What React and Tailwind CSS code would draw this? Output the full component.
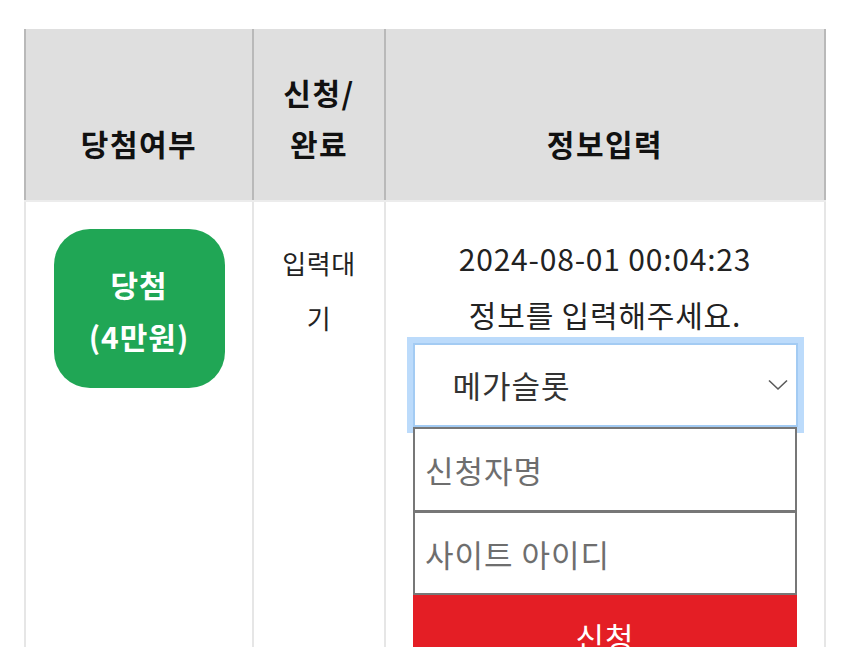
import React, { useState } from "react";

const font = { fontFamily: '"Noto Sans CJK KR", "Noto Sans", sans-serif' };

const ChevronDown = () => (
  <svg
    className="pointer-events-none absolute right-[10px] top-1/2 -translate-y-1/2"
    width="20"
    height="12"
    viewBox="0 0 20 12"
    fill="none"
  >
    <path d="M1 1.5 L10 10 L19 1.5" stroke="#5a5a5a" strokeWidth="1.6" />
  </svg>
);

export default function App() {
  const [site, setSite] = useState("megaslot");
  const [name, setName] = useState("");
  const [siteId, setSiteId] = useState("");

  return (
    <div className="min-h-screen bg-white pl-[24px] pt-[29px]" style={font}>
      <div className="w-[802px]">
        {/* 헤더 */}
        <div className="grid h-[171px] grid-cols-[228px_132px_1fr] bg-[#dfdfdf] text-[30px] font-bold leading-[51px] tracking-[1.5px] text-[#111]">
          <div className="flex items-end justify-center border-l-2 border-[#b9b9b9] pb-[31px]">
            당첨여부
          </div>
          <div className="flex items-end justify-center border-l-2 border-[#b9b9b9] pb-[31px] text-center">
            신청/
            <br />
            완료
          </div>
          <div className="flex items-end justify-center border-x-2 border-[#b9b9b9] pb-[31px]">
            정보입력
          </div>
        </div>

        {/* 당첨 내역 */}
        <div className="grid h-[520px] grid-cols-[228px_132px_1fr] border-t-2 border-[#ececec]">
          <div className="flex justify-center border-l-2 border-[#e6e6e6] pt-[27px]">
            <div className="flex h-[159px] w-[171px] flex-col items-center justify-center rounded-[36px] bg-[#20a655] pt-[2px] text-[30px] font-bold leading-[52px] tracking-[1px] text-white">
              <span>당첨</span>
              <span>(4만원)</span>
            </div>
          </div>

          <div className="border-l-2 border-[#e6e6e6] pt-[33px] text-center text-[26px] leading-[55px] tracking-[0.5px] text-[#222]">
            입력대
            <br />기
          </div>

          <div className="flex flex-col items-center border-x-2 border-[#e6e6e6] pt-[28px]">
            <p className="text-center text-[30px] leading-[56px] tracking-[0.8px] text-[#222]">
              2024-08-01 00:04:23
              <br />
              정보를 입력해주세요.
            </p>

            <div className="relative mt-[1px] w-[385px]">
              <select
                value={site}
                onChange={(e) => setSite(e.target.value)}
                className="block h-[84px] w-full appearance-none border-2 border-[#a3cbf3] bg-white pl-[38px] text-[31px] tracking-[1px] text-[#333] outline-none ring-[6px] ring-[#bcdbfb]"
              >
                <option value="megaslot">메가슬롯</option>
              </select>
              <ChevronDown />
            </div>

            <input
              type="text"
              value={name}
              onChange={(e) => setName(e.target.value)}
              placeholder="신청자명"
              className="relative block h-[85px] w-[384px] border-2 border-[#777] bg-white px-[10px] text-[31px] tracking-[1px] text-[#333] outline-none placeholder:text-[#6e6e6e]"
            />
            <input
              type="text"
              value={siteId}
              onChange={(e) => setSiteId(e.target.value)}
              placeholder="사이트 아이디"
              className="relative block h-[83px] w-[384px] border-2 border-t-[1px] border-[#777] bg-white px-[10px] text-[31px] tracking-[1px] text-[#333] outline-none placeholder:text-[#6e6e6e]"
            />
            <button
              type="button"
              className="block h-[84px] w-[384px] bg-[#e41e25] text-[31px] tracking-[1px] text-white"
            >
              신청
            </button>
          </div>
        </div>
      </div>
    </div>
  );
}
